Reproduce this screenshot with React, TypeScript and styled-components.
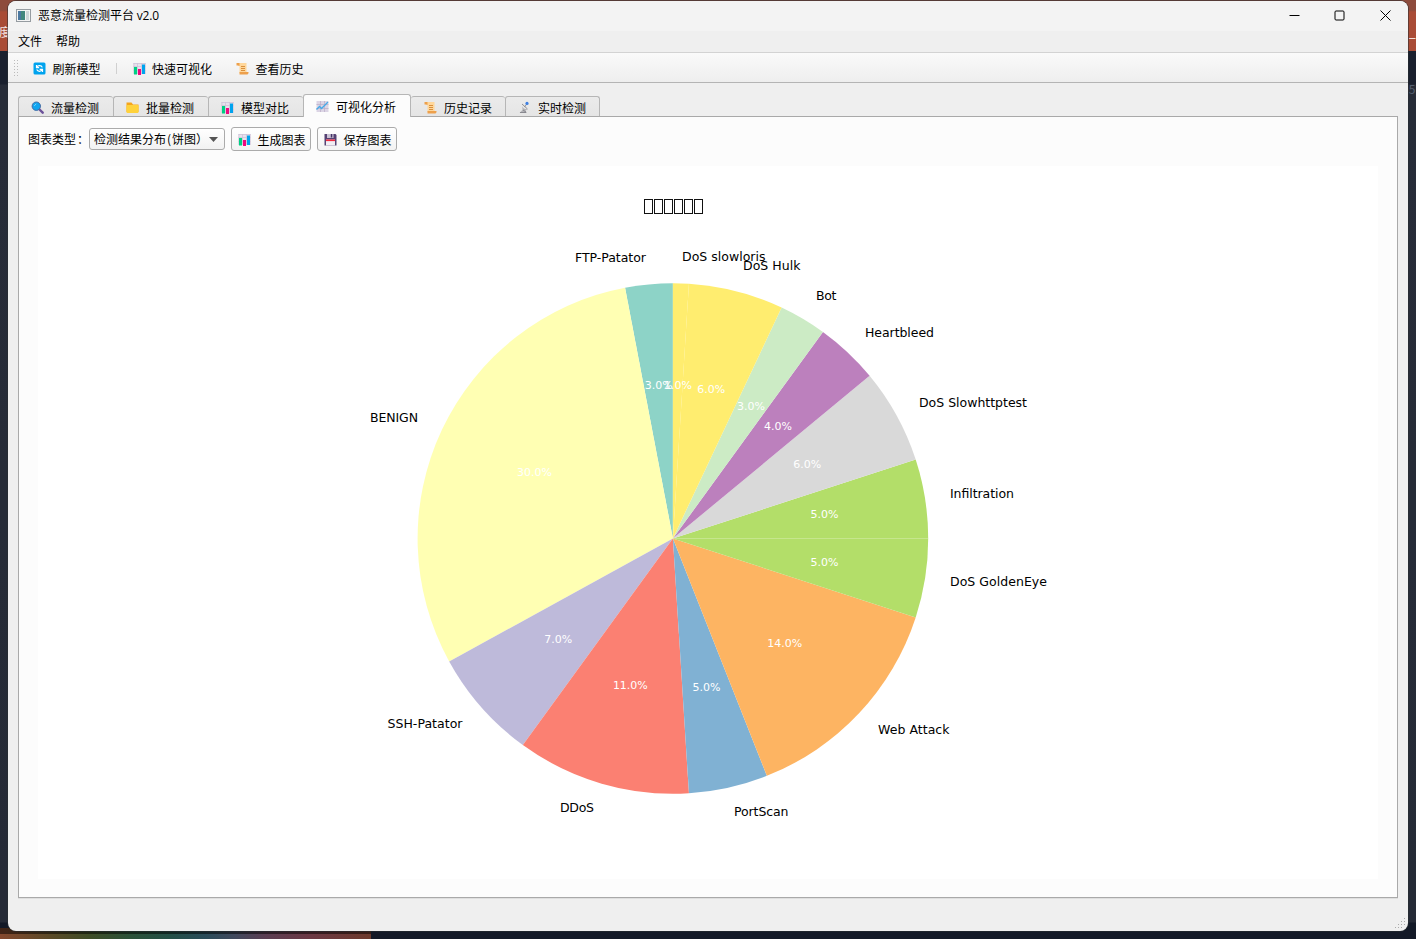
import React from 'react';
import styled, { createGlobalStyle } from 'styled-components';

const GlobalStyle = createGlobalStyle`
  * { box-sizing: border-box; }
  body { margin: 0; overflow: hidden; font: 12px/16px 'Noto Sans CJK SC', sans-serif; color: #000; }
`;

const Desktop = styled.div`
  position: relative;
  width: 1416px;
  height: 939px;
  padding: 1px 8px 8px;
  background: linear-gradient(#8d4b3c 0, #8d4b3c 10px, #a94c36 12px, #a94c36 51px, #1a202e 51px, #1a202e 84px, #272c38 85px, #252a36 922px, #131927 923px);
`;

const Spectrum = styled.div`
  position: absolute;
  left: 0;
  top: 928px;
  width: 371px;
  height: 11px;
  background: linear-gradient(rgba(0, 0, 0, .5) 6px, transparent 6px),
    linear-gradient(90deg, #84482e, #5b4a27 50px, #3e4d27 90px, #2b5138 130px, #245047 170px, #2a4c5a 205px, #41495d 235px, #5b3e53 265px, #6c3844 310px, #6d3a2c 371px);
`;

const Behind = styled.span<{ $x: number; $y: number; $c: string }>`
  position: absolute;
  left: ${p => p.$x}px;
  top: ${p => p.$y}px;
  color: ${p => p.$c};
  white-space: nowrap;
`;

const Window = styled.main`
  position: relative;
  height: 930px;
  display: flex;
  flex-direction: column;
  background: #efefef;
  border-radius: 8px;
  overflow: hidden;
  box-shadow: 0 0 0 1px rgba(40, 45, 50, .55);
`;

const TitleBar = styled.header`
  height: 30px;
  flex: none;
  display: flex;
  align-items: center;
  padding: 0 0 2px 8px;
  background: #f3f3f3;
`;

const Caption = styled.span`
  flex: 1;
  margin-left: 7px;
`;

const Latin = styled.span`
  font-family: 'Open Sans', sans-serif;
  letter-spacing: -.15px;
`;

const WindowButton = styled.span`
  width: 45.5px;
  display: flex;
  justify-content: center;
`;

const MenuBar = styled.nav`
  height: 21px;
  flex: none;
  display: flex;
  align-items: center;
  gap: 14px;
  padding: 0 0 2px 10px;
`;

const ToolBar = styled.div`
  height: 31px;
  flex: none;
  display: flex;
  align-items: center;
  padding-top: 2px;
  border-top: 1px solid #d3d3d3;
  border-bottom: 1px solid #b4b4b4;
  background: linear-gradient(#fafafa, #eee);
`;

const Grip = styled.i`
  width: 5px;
  height: 18px;
  margin: -2px 15px 0 5px;
  background: radial-gradient(circle, #bbb 0.6px, transparent 0.9px) 0 0 / 3px 3px;
`;

const Action = styled.span<{ $after: number }>`
  display: flex;
  align-items: center;
  gap: 6.5px;
  margin-right: ${p => p.$after}px;
`;

const Divider = styled.i`
  width: 1px;
  height: 11px;
  margin-right: 15.5px;
  background: #d0d0d0;
`;

const TabStrip = styled.div`
  height: 33px;
  flex: none;
  display: flex;
  align-items: flex-end;
  padding-left: 10px;
`;

const Tab = styled.div<{ $w: number; $active?: boolean }>`
  width: ${p => p.$w}px;
  height: ${p => (p.$active ? 23 : 20)}px;
  display: flex;
  align-items: center;
  gap: 7px;
  padding: ${p => (p.$active ? '1px 0 0 12px' : '3px 0 0 12px')};
  white-space: nowrap;
  border: 1px solid #b6b6b6;
  border-bottom: 0;
  border-right-width: ${p => (p.$active ? 1 : 0)}px;
  border-radius: 3px 3px 0 0;
  background: ${p => (p.$active ? '#fcfcfc' : 'linear-gradient(#ebebeb, #e5e5e5)')};
  margin-bottom: ${p => (p.$active ? -1 : 0)}px;
  z-index: 1;
  &:last-child { border-right-width: 1px; }
  ${p => p.$active && '& + div { border-left: 0; padding-left: 13px; }'}
`;

const Panel = styled.section`
  height: 782px;
  flex: none;
  margin: 0 10px;
  padding: 10px 9px;
  border: 1px solid #a9a9a9;
  background: #fcfcfc;
  box-shadow: 0 1px #dfdfdf;
`;

const Controls = styled.div`
  height: 24px;
  display: flex;
  align-items: center;
  gap: 6px;
`;

const Label = styled.span`
  width: 55px;
  white-space: nowrap;
`;

const Colon = styled.span`
  margin-left: 1px;
`;

const Select = styled.div`
  width: 136px;
  height: 22px;
  display: flex;
  align-items: center;
  justify-content: space-between;
  padding: 0 6px 0 4px;
  border: 1px solid #ababab;
  border-radius: 3px;
  background: linear-gradient(#fff, #f2f2f2);
  white-space: nowrap;
`;

const Paren = styled.span`
  margin: 0 1px;
`;

const Button = styled.div`
  width: 80px;
  height: 24px;
  display: flex;
  align-items: center;
  gap: 7px;
  padding: 2px 0 0 5.5px;
  border: 1px solid #ababab;
  border-radius: 3px;
  background: linear-gradient(#fff, #f3f3f3);
  white-space: nowrap;
`;

const Canvas = styled.div`
  width: 1340px;
  height: 713px;
  margin: 15px 0 0 10px;
  background: #fff;
  svg { display: block; }
`;

const SizeGrip = styled.svg`
  position: absolute;
  right: 1px;
  bottom: 1px;
`;

const Glyph = styled.svg`
  flex: none;
  margin-top: -1px;
`;

type IconName = 'refresh' | 'bars' | 'scroll' | 'search' | 'folder' | 'trend' | 'dish' | 'disk';

const drawings: Record<IconName, React.ReactNode> = {
  refresh: (
    <>
      <rect x="0.5" y="0.5" width="12" height="12" rx="1.5" fill="#00a3ee" />
      <path d="M3.5 3v2.6h2.6M3.7 5.3C4.8 3 8.4 3 9.3 5.4M9.5 10V7.3H6.6M9.3 7.6C8.2 10 4.8 10 3.7 7.6" fill="none" stroke="#fff" strokeWidth="1.2" />
    </>
  ),
  bars: (
    <>
      <rect x="0.5" y="1" width="12" height="11" fill="#e8e2ed" />
      <path d="M.5 1.5h12M.5 4.5h12M.5 8.5h12M.9 1v11M4.5 1v11M8.5 1v11M12.2 1v11" stroke="#cfc4d8" strokeWidth=".8" />
      <rect x="1" y="5" width="3" height="7.5" fill="#00d084" />
      <rect x="5" y="7" width="3" height="6" fill="#f0087f" />
      <rect x="9" y="2.5" width="3" height="9.5" fill="#00a3ee" />
    </>
  ),
  scroll: (
    <>
      <path d="M2 1h8.5v10H3.5V4H2z" fill="#ffd79b" />
      <path d="M.5 1h3v3l-1-.5H.5zM3.5 10h9v1.2l-1 1.3h-8z" fill="#eda04c" />
      <path d="M5 4.5h4M5 6.5h4M5 8.5h4" stroke="#d98f3c" />
    </>
  ),
  search: (
    <>
      <path d="m8 8 3.7 3.7" stroke="#6c529a" strokeWidth="2.4" strokeLinecap="round" />
      <circle cx="5.3" cy="5.2" r="4.2" fill="#10a5f0" stroke="#456ca4" strokeWidth="1" />
      <path d="M3.2 4.8 5.2 3" stroke="#7fd6ff" />
    </>
  ),
  folder: (
    <>
      <path d="M.5 1.5h5l1.5 2h5.5V11H.5z" fill="#f5a51c" />
      <rect x=".5" y="4" width="12" height="8" rx="1" fill="#ffd23b" />
    </>
  ),
  trend: (
    <>
      <rect x=".5" y="1" width="12" height="11" fill="#dcd5e5" />
      <path d="M.5 4.5h12M.5 8.5h12M4.5 1v11M8.5 1v11" stroke="#b9adc7" strokeWidth=".7" />
      <path d="m.5 9.5 3-3 2 2L12 2" fill="none" stroke="#45a9e8" strokeWidth="1.3" />
    </>
  ),
  dish: (
    <>
      <path d="M4 2.5C3.6 6 6 8.5 9.5 8L7.5 9.8 9 12H1.5l3-3.2z" fill="#b4b4b8" />
      <path d="m4 3 5.5 5M6.5 6l2.3-3M2 11.5h6M5 9l3 2" stroke="#85858b" strokeWidth=".9" />
      <circle cx="9" cy="2.4" r="1.6" fill="#3f80e2" />
    </>
  ),
  disk: (
    <>
      <path d="M.5 1h11l1 1v10.5H.5z" fill="#554273" />
      <rect x="3" y="1" width="6.5" height="4" fill="#c9c2d4" />
      <rect x="6.8" y="1" width="1.5" height="3.5" fill="#443365" />
      <rect x="2" y="6.5" width="9" height="6" fill="#f1edf3" />
      <rect x="2" y="6.5" width="9" height="1.6" fill="#f2293e" />
    </>
  ),
};

const Icon = ({ name }: { name: IconName }) => (
  <Glyph width="13" height="13" viewBox="0 0 13 13">{drawings[name]}</Glyph>
);

type Slice = { name: string; share: number; color: string; x: number; y: number; w: number };

const slices: Slice[] = [
  { name: 'FTP-Patator', share: 3, color: '#8dd3c7', x: 575, y: 262, w: 71 },
  { name: 'BENIGN', share: 30, color: '#ffffb3', x: 370, y: 422, w: 48 },
  { name: 'SSH-Patator', share: 7, color: '#bebada', x: 387.5, y: 728, w: 75 },
  { name: 'DDoS', share: 11, color: '#fb8072', x: 560, y: 812, w: 34 },
  { name: 'PortScan', share: 5, color: '#80b1d3', x: 734, y: 816, w: 54.5 },
  { name: 'Web Attack', share: 14, color: '#fdb462', x: 878, y: 734, w: 71.5 },
  { name: 'DoS GoldenEye', share: 5, color: '#b3de69', x: 950, y: 586, w: 97 },
  { name: 'Infiltration', share: 5, color: '#b3de69', x: 950, y: 498, w: 64 },
  { name: 'DoS Slowhttptest', share: 6, color: '#d9d9d9', x: 919, y: 407, w: 108 },
  { name: 'Heartbleed', share: 4, color: '#bc80bd', x: 865, y: 337, w: 69 },
  { name: 'Bot', share: 3, color: '#ccebc5', x: 816, y: 300, w: 20.5 },
  { name: 'DoS Hulk', share: 6, color: '#ffed6f', x: 743, y: 270, w: 57.5 },
  { name: 'DoS slowloris', share: 1, color: '#ffed6f', x: 682, y: 261, w: 83.5 },
];

const CX = 672.9;
const CY = 538.5;
const R = 255.3;

const at = (percent: number, r: number) => {
  const a = Math.PI / 2 + (percent / 100) * 2 * Math.PI;
  return [CX + r * Math.cos(a), CY - r * Math.sin(a)];
};

const PieChart = () => {
  let start = 0;
  const parts = slices.map(s => {
    const from = start;
    start += s.share;
    const [x1, y1] = at(from, R);
    const [x2, y2] = at(start, R);
    const [tx, ty] = at(from + s.share / 2, R * 0.6);
    return { ...s, d: `M${CX} ${CY}L${x1} ${y1}A${R} ${R} 0 0 0 ${x2} ${y2}Z`, tx, ty };
  });
  return (
    <svg width="1340" height="713" viewBox="38 166 1340 713" fontFamily="DejaVu Sans, sans-serif">
      {[0, 1, 2, 3, 4, 5].map(i => (
        <rect key={i} x={644.5 + i * 10} y="199.5" width="8" height="14" fill="none" stroke="#111" />
      ))}
      {parts.map(p => <path key={p.name} d={p.d} fill={p.color} />)}
      {parts.map(p => (
        <React.Fragment key={p.name}>
          <text x={p.x} y={p.y} fontSize="12.5" textLength={p.w}>{p.name}</text>
          <text x={p.tx + 0.2} y={p.ty + 3.2} fontSize="11" fill="#fff" textAnchor="middle">{`${p.share}.0%`}</text>
        </React.Fragment>
      ))}
    </svg>
  );
};

const tabs: { label: string; icon: IconName; w: number; active?: boolean }[] = [
  { label: '流量检测', icon: 'search', w: 95 },
  { label: '批量检测', icon: 'folder', w: 95 },
  { label: '模型对比', icon: 'bars', w: 95 },
  { label: '可视化分析', icon: 'trend', w: 108, active: true },
  { label: '历史记录', icon: 'scroll', w: 94 },
  { label: '实时检测', icon: 'dish', w: 95 },
];

export default function App() {
  return (
    <Desktop>
      <GlobalStyle />
      <Spectrum />
      <Behind $x={-1} $y={24} $c="#f4e4e0">度</Behind>
      <Behind $x={1409} $y={24} $c="#fff">_L</Behind>
      <Behind $x={1402} $y={81} $c="#566070">05</Behind>
      <Window>
        <TitleBar>
          <svg width="15" height="13" viewBox="0 0 15 13">
            <rect x=".5" y=".5" width="14" height="12" fill="#f4f4f4" stroke="#969ca1" />
            <rect x="2" y="2" width="7" height="9" fill="#43877e" />
            <rect x="2" y="2" width="3" height="9" fill="#4b78a0" />
            <rect x="10" y="2" width="3" height="9" fill="#cfd6d9" />
          </svg>
          <Caption>恶意流量检测平台 <Latin>v2.0</Latin></Caption>
          <WindowButton><svg width="11" height="11"><path d="M.5 5.5h10" stroke="#000" /></svg></WindowButton>
          <WindowButton><svg width="11" height="11"><rect x="1" y="1" width="9" height="9" rx="1" fill="none" stroke="#000" /></svg></WindowButton>
          <WindowButton><svg width="11" height="11"><path d="m.5.5 10 10m0-10-10 10" stroke="#000" /></svg></WindowButton>
        </TitleBar>
        <MenuBar><span>文件</span><span>帮助</span></MenuBar>
        <ToolBar>
          <Grip />
          <Action $after={15.5}><Icon name="refresh" />刷新模型</Action>
          <Divider />
          <Action $after={24}><Icon name="bars" />快速可视化</Action>
          <Action $after={0}><Icon name="scroll" />查看历史</Action>
        </ToolBar>
        <TabStrip>
          {tabs.map(t => (
            <Tab key={t.label} $w={t.w} $active={t.active}><Icon name={t.icon} />{t.label}</Tab>
          ))}
        </TabStrip>
        <Panel>
          <Controls>
            <Label>图表类型<Colon>：</Colon></Label>
            <Select><span>检测结果分布<Paren>(</Paren>饼图）</span><svg width="9" height="5"><path d="M0 0h9L4.5 5z" fill="#555" /></svg></Select>
            <Button><Icon name="bars" />生成图表</Button>
            <Button><Icon name="disk" />保存图表</Button>
          </Controls>
          <Canvas><PieChart /></Canvas>
        </Panel>
        <SizeGrip width="12" height="12">
          {[[10, 1], [7, 4], [10, 4], [4, 7], [7, 7], [10, 7], [1, 10], [4, 10], [7, 10]].map(([x, y]) => (
            <rect key={`${x}-${y}`} x={x - 1} y={y - 1} width="1" height="1" fill="#aaa" />
          ))}
        </SizeGrip>
      </Window>
    </Desktop>
  );
}
